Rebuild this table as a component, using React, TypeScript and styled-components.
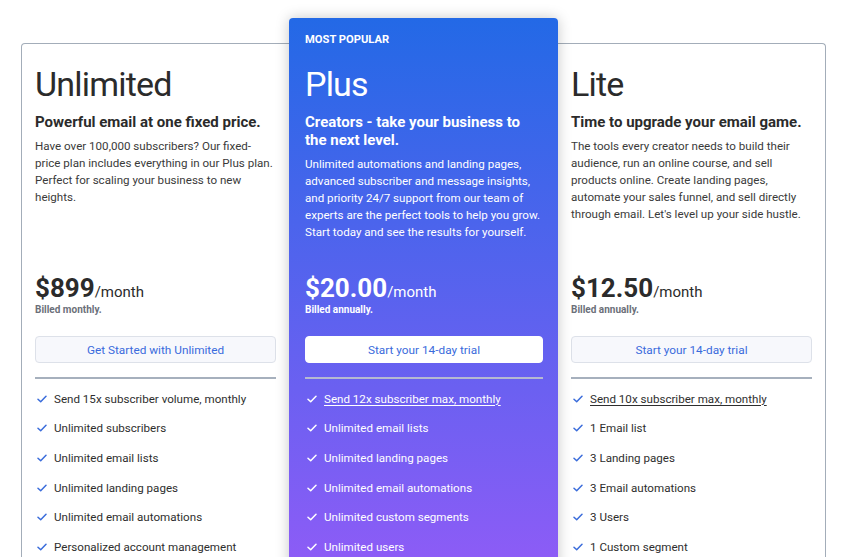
import React from 'react';
import styled, { createGlobalStyle } from 'styled-components';

const Global = createGlobalStyle`
  html, body { margin: 0; padding: 0; background: #ffffff; overflow: hidden; }
  body { font-family: Roboto, "Liberation Sans", Arial, sans-serif; -webkit-font-smoothing: antialiased; }
  * { box-sizing: border-box; }
`;

const Page = styled.div`
  padding: 43px 0 0 21px;
`;

const Board = styled.div`
  width: 805px;
  min-height: 620px;
  border: 1px solid #a3adb9;
  border-bottom: none;
  border-radius: 4px 4px 0 0;
  display: grid;
  grid-template-columns: 267px 269px 267px;
  align-items: start;
`;

const Card = styled.div<{ $featured?: boolean }>`
  display: flex;
  flex-direction: column;
  position: relative;
  padding: ${(p) => (p.$featured ? '15px 15px 60px 16px' : '17px 13px 60px 13px')};
  color: ${(p) => (p.$featured ? '#ffffff' : '#2b2b2b')};
  ${(p) =>
    p.$featured &&
    `
    margin-top: -26px;
    z-index: 1;
    border-radius: 4px;
    background: linear-gradient(180deg, #2369e6 0px, #8c5cf6 540px, #8c5cf6 100%);
    box-shadow: 0 0 14px rgba(0, 0, 0, 0.22);
  `}
`;

const Badge = styled.div`
  font-size: 11.2px;
  line-height: 14px;
  font-weight: 700;
  margin-bottom: 14px;
`;

const Intro = styled.div`
  height: 211px;
`;

const Title = styled.h2`
  margin: 0;
  font-size: 34px;
  line-height: 46px;
  font-weight: 400;
  letter-spacing: -0.8px;
`;

const Tagline = styled.h3`
  margin: 6px 0 0;
  font-size: 15px;
  line-height: 18px;
  font-weight: 700;
`;

const Blurb = styled.p<{ $light?: boolean }>`
  margin: 7px 0 0;
  font-size: 11.6px;
  line-height: 17px;
  color: ${(p) => (p.$light ? '#ffffff' : '#3a3a3a')};
`;

const PriceRow = styled.div`
  font-size: 26px;
  line-height: 32px;
  height: 32px;
  font-weight: 700;
  white-space: nowrap;
`;

const Per = styled.span`
  font-size: 15px;
  line-height: 1;
  font-weight: 400;
`;

const Billing = styled.div<{ $light?: boolean }>`
  font-size: 10px;
  line-height: 12px;
  font-weight: 700;
  color: ${(p) => (p.$light ? '#ffffff' : '#6b6f79')};
`;

const Action = styled.button<{ $light?: boolean }>`
  margin-top: 20px;
  height: 27px;
  width: 100%;
  border-radius: 4px;
  border: 1px solid ${(p) => (p.$light ? '#ffffff' : '#dde1e9')};
  background: ${(p) => (p.$light ? '#ffffff' : '#f7f8fc')};
  color: #3a6bdc;
  font-family: inherit;
  font-size: 11.8px;
  cursor: pointer;
`;

const Rule = styled.hr<{ $light?: boolean }>`
  margin: 14px 0 0;
  border: none;
  height: 2px;
  background: ${(p) => (p.$light ? '#b6b9d1' : '#a6b0bd')};
`;

const Features = styled.ul`
  list-style: none;
  margin: 5px 0 0;
  padding: 0;
`;

const Feature = styled.li<{ $light?: boolean }>`
  display: flex;
  align-items: center;
  gap: 7px;
  height: 29.6px;
  padding-left: 2px;
  font-size: 11.6px;
  color: ${(p) => (p.$light ? '#ffffff' : '#2e2e2e')};
`;

const Label = styled.span<{ $underline?: boolean }>`
  text-decoration: ${(p) => (p.$underline ? 'underline' : 'none')};
  text-underline-offset: 2px;
  text-decoration-thickness: 1px;
`;

const Check = ({ light }: { light?: boolean }) => (
  <svg width="10" height="8" viewBox="0 0 10 8" fill="none">
    <path
      d="M1 4.2 L3.7 6.8 L9 1.2"
      stroke={light ? '#ffffff' : '#3b6ddb'}
      strokeWidth="1.5"
      strokeLinecap="round"
      strokeLinejoin="round"
    />
  </svg>
);

type Plan = {
  badge?: string;
  title: string;
  tagline: string;
  blurb: string;
  amount: string;
  billing: string;
  action: string;
  features: string[];
  underlineFirst?: boolean;
  featured?: boolean;
};

const plans: Plan[] = [
  {
    title: 'Unlimited',
    tagline: 'Powerful email at one fixed price.',
    blurb:
      'Have over 100,000 subscribers? Our fixed-price plan includes everything in our Plus plan. Perfect for scaling your business to new heights.',
    amount: '$899',
    billing: 'Billed monthly.',
    action: 'Get Started with Unlimited',
    features: [
      'Send 15x subscriber volume, monthly',
      'Unlimited subscribers',
      'Unlimited email lists',
      'Unlimited landing pages',
      'Unlimited email automations',
      'Personalized account management',
    ],
  },
  {
    badge: 'MOST POPULAR',
    title: 'Plus',
    tagline: 'Creators - take your business to the next level.',
    blurb:
      'Unlimited automations and landing pages, advanced subscriber and message insights, and priority 24/7 support from our team of experts are the perfect tools to help you grow. Start today and see the results for yourself.',
    amount: '$20.00',
    billing: 'Billed annually.',
    action: 'Start your 14-day trial',
    features: [
      'Send 12x subscriber max, monthly',
      'Unlimited email lists',
      'Unlimited landing pages',
      'Unlimited email automations',
      'Unlimited custom segments',
      'Unlimited users',
    ],
    underlineFirst: true,
    featured: true,
  },
  {
    title: 'Lite',
    tagline: 'Time to upgrade your email game.',
    blurb:
      "The tools every creator needs to build their audience, run an online course, and sell products online. Create landing pages, automate your sales funnel, and sell directly through email. Let's level up your side hustle.",
    amount: '$12.50',
    billing: 'Billed annually.',
    action: 'Start your 14-day trial',
    features: [
      'Send 10x subscriber max, monthly',
      '1 Email list',
      '3 Landing pages',
      '3 Email automations',
      '3 Users',
      '1 Custom segment',
    ],
    underlineFirst: true,
  },
];

export default function App() {
  return (
    <Page>
      <Global />
      <Board>
        {plans.map((plan) => (
          <Card key={plan.title} $featured={plan.featured}>
            {plan.badge && <Badge>{plan.badge}</Badge>}
            <Intro>
              <Title>{plan.title}</Title>
              <Tagline>{plan.tagline}</Tagline>
              <Blurb $light={plan.featured}>{plan.blurb}</Blurb>
            </Intro>
            <PriceRow>
              {plan.amount}
              <Per>/month</Per>
            </PriceRow>
            <Billing $light={plan.featured}>{plan.billing}</Billing>
            <Action $light={plan.featured}>{plan.action}</Action>
            <Rule $light={plan.featured} />
            <Features>
              {plan.features.map((f, i) => (
                <Feature key={f} $light={plan.featured}>
                  <Check light={plan.featured} />
                  <Label $underline={plan.underlineFirst && i === 0}>{f}</Label>
                </Feature>
              ))}
            </Features>
          </Card>
        ))}
      </Board>
    </Page>
  );
}
